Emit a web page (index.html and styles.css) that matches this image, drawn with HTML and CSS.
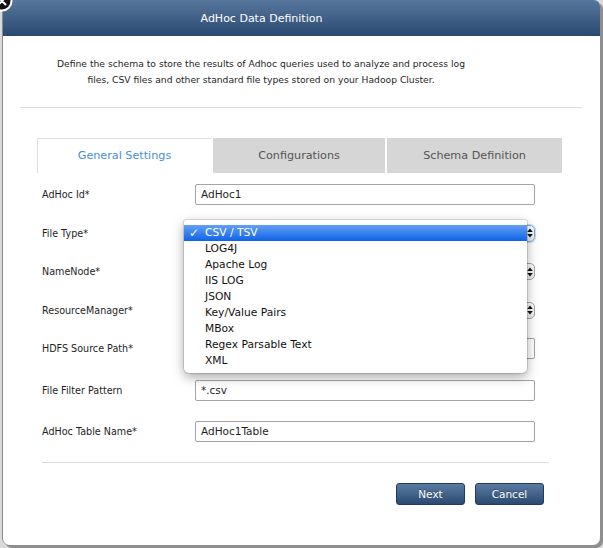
FILE: index.html
```html
<!DOCTYPE html>
<html>
<head>
<meta charset="utf-8">
<title>AdHoc Data Definition</title>
<link rel="stylesheet" href="styles.css">
</head>
<body>
<div class="dialog">
  <div class="header">AdHoc Data Definition</div>
  <div class="content">
    <p class="intro">Define the schema to store the results of Adhoc queries used to analyze and process log files, CSV files and other standard file types stored on your Hadoop Cluster.</p>
    <div class="rule"></div>
    <div class="tabs">
      <div class="tab tab-first active">General Settings</div>
      <div class="tab tab-mid">Configurations</div>
      <div class="tab tab-last">Schema Definition</div>
    </div>
    <div class="panel">
      <div class="row">
        <div class="label">AdHoc Id*</div>
        <div class="input">AdHoc1</div>
      </div>
      <div class="row">
        <div class="label">File Type*</div>
        <div class="select focused"><span class="val"></span><span class="arrows"><svg width="6" height="10" viewBox="0 0 6 10"><path d="M3 0.5 L5.8 4 L0.2 4 Z M3 9.5 L5.8 6 L0.2 6 Z" fill="#111"/></svg></span></div>
      </div>
      <div class="row">
        <div class="label">NameNode*</div>
        <div class="select"><span class="val"></span><span class="arrows"><svg width="6" height="10" viewBox="0 0 6 10"><path d="M3 0.5 L5.8 4 L0.2 4 Z M3 9.5 L5.8 6 L0.2 6 Z" fill="#111"/></svg></span></div>
      </div>
      <div class="row">
        <div class="label">ResourceManager*</div>
        <div class="select"><span class="val"></span><span class="arrows"><svg width="6" height="10" viewBox="0 0 6 10"><path d="M3 0.5 L5.8 4 L0.2 4 Z M3 9.5 L5.8 6 L0.2 6 Z" fill="#111"/></svg></span></div>
      </div>
      <div class="row row-wide">
        <div class="label">HDFS Source Path*</div>
        <div class="input"></div>
      </div>
      <div class="row row-wide">
        <div class="label">File Filter Pattern</div>
        <div class="input">*.csv</div>
      </div>
      <div class="row">
        <div class="label">AdHoc Table Name*</div>
        <div class="input">AdHoc1Table</div>
      </div>
      <div class="rule rule-bottom"></div>
      <div class="actions">
        <button class="btn">Next</button>
        <button class="btn">Cancel</button>
      </div>

      <div class="menu">
        <div class="menu-item selected"><span class="check">✓</span>CSV / TSV</div>
        <div class="menu-item"><span class="check"></span>LOG4J</div>
        <div class="menu-item"><span class="check"></span>Apache Log</div>
        <div class="menu-item"><span class="check"></span>IIS LOG</div>
        <div class="menu-item"><span class="check"></span>JSON</div>
        <div class="menu-item"><span class="check"></span>Key/Value Pairs</div>
        <div class="menu-item"><span class="check"></span>MBox</div>
        <div class="menu-item"><span class="check"></span>Regex Parsable Text</div>
        <div class="menu-item"><span class="check"></span>XML</div>
      </div>
    </div>
  </div>
</div>
<div class="close"><svg width="22" height="22" viewBox="0 0 22 22"><circle cx="11" cy="11" r="9.5" fill="#111" stroke="#fff" stroke-width="2"/><path d="M7.5 7.5 L14.5 14.5 M14.5 7.5 L7.5 14.5" stroke="#fff" stroke-width="2" stroke-linecap="round"/></svg></div>
</body>
</html>
```
FILE: styles.css
```css
* { box-sizing: border-box; }
html, body { margin: 0; padding: 0; }
body {
  width: 603px;
  height: 548px;
  overflow: hidden;
  position: relative;
  background: #dadada;
  font-family: "DejaVu Sans", "Liberation Sans", sans-serif;
  color: #222;
}
.dialog {
  margin-left: 2px;
  width: 598px;
  height: 545px;
  background: #fff;
  border-left: 1px solid #8a8a8a;
  border-radius: 0 6px 7px 7px;
  box-shadow: 3px 3px 0 #8e8e8e;
  overflow: hidden;
}
.header {
  height: 36px;
  background: linear-gradient(#58779c, #2a4971);
  color: #fff;
  font-size: 11px;
  line-height: 37px;
  text-align: center;
  padding-right: 80px;
}
.content { padding: 0 18px 0 17px; }
.intro {
  width: 430px;
  margin: 20px 0 0 26px;
  font-size: 9.2px;
  line-height: 16px;
  text-align: center;
  color: #1e1e1e;
}
.rule { height: 1px; background: #dcdcdc; margin-top: 19px; }
.tabs {
  display: flex;
  gap: 2px;
  height: 35px;
  margin: 30px 20px 0 17px;
}
.tab {
  height: 35px;
  line-height: 35px;
  text-align: center;
  font-size: 11.2px;
  color: #555;
  background: #d6d6d6;
}
.tab-first { flex: 0 0 174px; }
.tab-mid { flex: 0 0 172px; }
.tab-last { flex: 0 0 175px; }
.tab.active {
  background: #fff;
  color: #4a8fd6;
  border-top: 1px solid #dedede;
  border-left: 1px solid #dedede;
  line-height: 34px;
}
.panel {
  position: relative;
  margin: 0 20px 0 17px;
  padding: 11px 13px 0 5px;
}
.row {
  display: flex;
  align-items: flex-start;
  height: 38.5px;
}
.row-wide { height: 41.5px; }
.label {
  width: 153px;
  line-height: 21px;
  font-size: 9.6px;
  color: #1e1e1e;
}
.input {
  width: 340px;
  height: 21px;
  border: 1px solid #a3a3a3;
  border-radius: 2px;
  padding-left: 5px;
  font-size: 10.5px;
  line-height: 19px;
  color: #1e1e1e;
  background: #fff;
}
.select {
  width: 340px;
  height: 17px;
  margin-top: 2px;
  display: flex;
  border: 1px solid #a6a6a6;
  border-radius: 5px;
  background: linear-gradient(#ffffff, #ededed);
}
.select.focused {
  border-color: #86acdc;
  box-shadow: 0 0 0 1px #c4daf4;
}
.val { flex: 1; }
.arrows {
  width: 10px;
  display: flex;
  align-items: center;
  justify-content: center;
  border-left: 1px solid #c4c4c4;
}
.rule-bottom { margin-top: 2.5px; }
.actions {
  display: flex;
  justify-content: flex-end;
  gap: 10px;
  margin-top: 20px;
  padding-right: 5px;
}
.btn {
  width: 69px;
  height: 22px;
  padding: 0;
  border: 1px solid #1f3b61;
  border-radius: 3px;
  background: linear-gradient(#5b7ba2, #2a4a72);
  color: #fff;
  font-family: "DejaVu Sans", "Liberation Sans", sans-serif;
  font-size: 10.5px;
  text-shadow: 0 -1px 0 rgba(0,0,0,0.3);
}
.menu {
  position: absolute;
  left: 147px;
  top: 47px;
  width: 343px;
  height: 153px;
  padding: 5px 0 4px;
  background: #fff;
  border-radius: 2px 2px 5px 5px;
  box-shadow: 0 0 0 1px rgba(0,0,0,0.12), 0 4px 12px rgba(0,0,0,0.35);
}
.menu-item {
  display: flex;
  height: 16px;
  line-height: 16px;
  font-size: 10.7px;
  color: #111;
}
.menu-item.selected {
  background: linear-gradient(#62a0f4, #0f63e6);
  color: #fff;
}
.check {
  flex: 0 0 21px;
  padding-left: 5px;
  font-size: 12px;
}
.close {
  position: absolute;
  left: -9px;
  top: -10px;
  width: 22px;
  height: 22px;
}
.close svg { display: block; }
```
